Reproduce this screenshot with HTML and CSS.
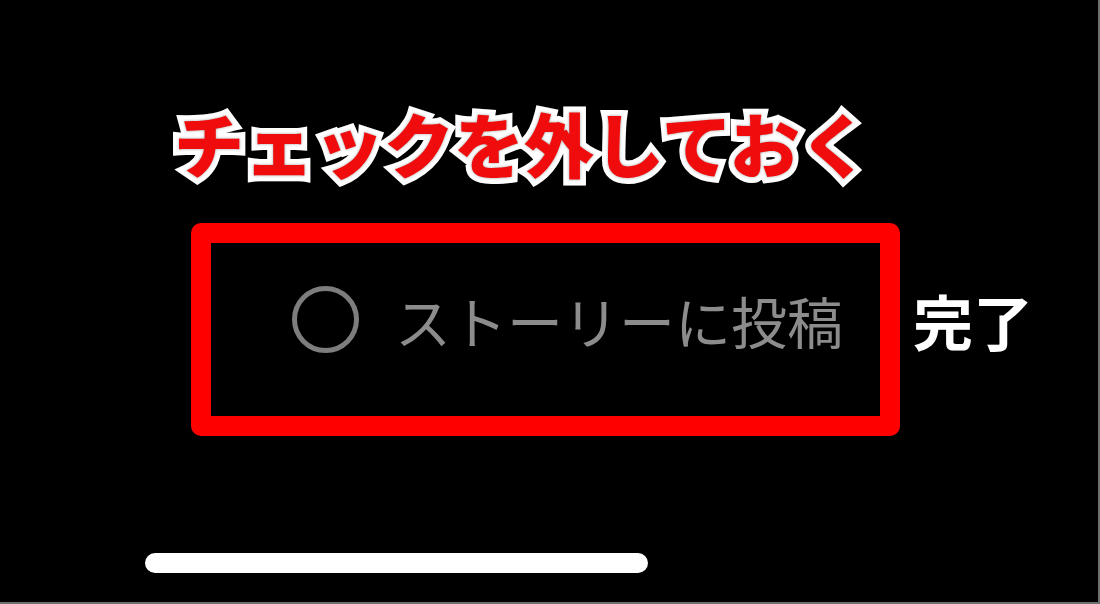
FILE: index.html
```html
<!DOCTYPE html>
<html lang="ja">
<head>
<meta charset="utf-8">
<title>ストーリーに投稿</title>
<link rel="stylesheet" href="styles.css">
</head>
<body>
<div class="screen">
  <div class="heading">チェックを外しておく</div>
  <div class="row">
    <div class="highlight">
      <span class="radio"></span>
      <span class="label">ストーリーに投稿</span>
    </div>
    <div class="done">完了</div>
  </div>
  <div class="home-bar"></div>
</div>
</body>
</html>
```

FILE: styles.css
```css
html, body {
  margin: 0;
  padding: 0;
  background: #000;
}

.screen {
  width: 1100px;
  height: 604px;
  box-sizing: border-box;
  background: #000;
  border-right: 2px solid #6e6e6e;
  border-bottom: 2px solid #6e6e6e;
  display: flex;
  flex-direction: column;
  font-family: "Noto Sans CJK JP", "Noto Sans", sans-serif;
  overflow: hidden;
}

.heading {
  margin-top: 108px;
  padding-left: 174px;
  font-size: 70px;
  line-height: 1;
  font-weight: 900;
  color: #f00c0c;
  -webkit-text-stroke: 12px #fff;
  paint-order: stroke fill;
  text-shadow: 0 0 3px rgba(150, 150, 150, 0.9);
  white-space: nowrap;
}

.row {
  display: flex;
  align-items: center;
  margin-top: 45px;
  margin-left: 191px;
}

.highlight {
  width: 709px;
  height: 213px;
  box-sizing: border-box;
  border: 20px solid #ff0000;
  border-radius: 10px;
  display: flex;
  align-items: center;
  padding-left: 81px;
  padding-bottom: 20px;
}

.radio {
  width: 67px;
  height: 67px;
  box-sizing: border-box;
  border: 5px solid #7d7d7d;
  border-radius: 50%;
  flex: none;
}

.label {
  margin-left: 36px;
  font-size: 56px;
  font-weight: 400;
  line-height: 1;
  color: #8c8c8c;
  white-space: nowrap;
}

.done {
  margin-left: 13px;
  margin-bottom: 20px;
  font-size: 60px;
  font-weight: 700;
  line-height: 1;
  color: #fff;
  white-space: nowrap;
}

.home-bar {
  width: 503px;
  height: 20px;
  border-radius: 10px;
  background: #fff;
  margin-left: 145px;
  margin-top: auto;
  margin-bottom: 29px;
}
```
